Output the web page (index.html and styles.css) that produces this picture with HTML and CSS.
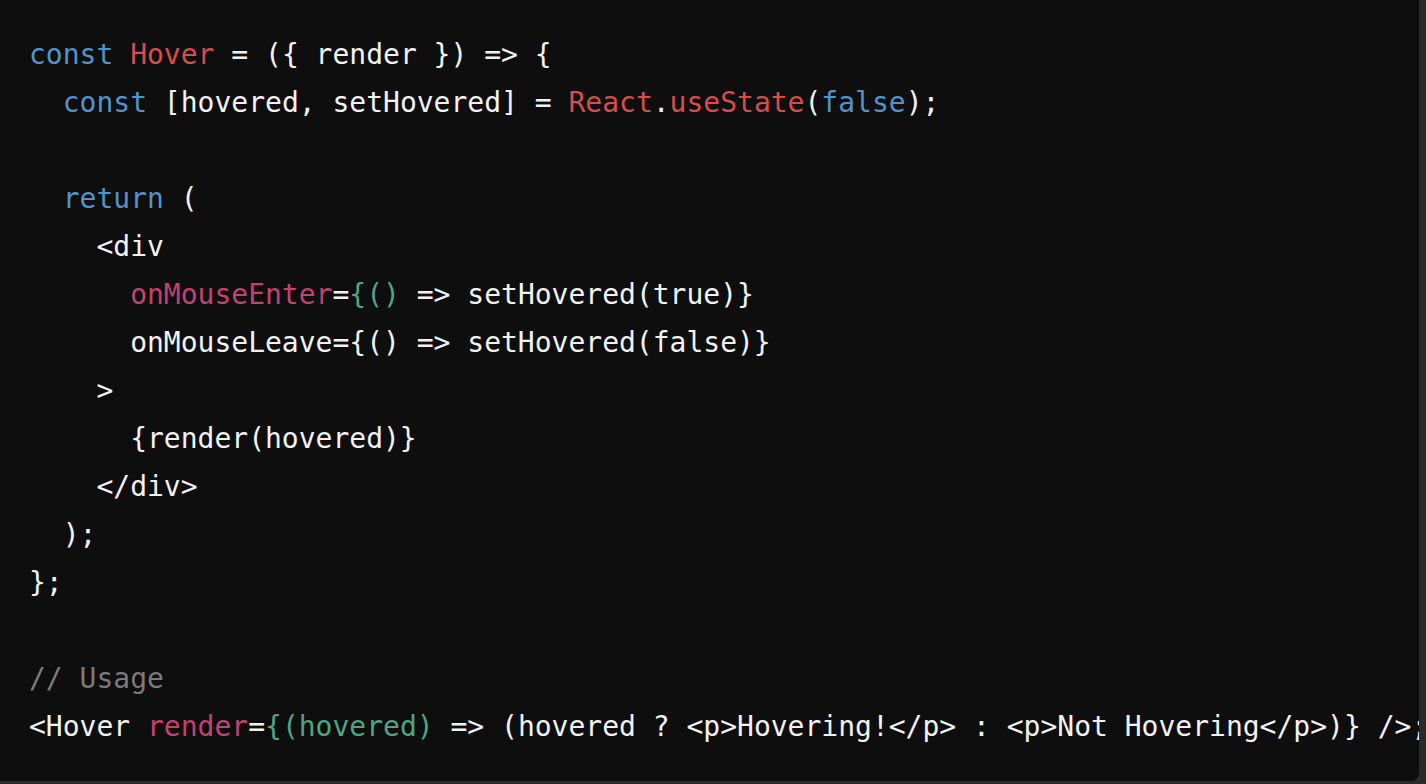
FILE: index.html
```html
<!DOCTYPE html>
<html>
<head>
<meta charset="utf-8">
<link rel="stylesheet" href="styles.css">
</head>
<body>
<div class="frame">
<pre class="code"><code><span class="kw">const</span> <span class="fn">Hover</span> = ({ render }) =&gt; {
  <span class="kw">const</span> [hovered, setHovered] = <span class="fn">React</span>.<span class="fn">useState</span>(<span class="kw">false</span>);

  <span class="kw">return</span> (
    &lt;div
      <span class="attr">onMouseEnter</span>=<span class="grn">{()</span> =&gt; setHovered(true)}
      onMouseLeave={() =&gt; setHovered(false)}
    &gt;
      {render(hovered)}
    &lt;/div&gt;
  );
};

<span class="cm">// Usage</span>
&lt;Hover <span class="attr">render</span>=<span class="grn">{(hovered)</span> =&gt; (hovered ? &lt;p&gt;Hovering!&lt;/p&gt; : &lt;p&gt;Not Hovering&lt;/p&gt;)} /&gt;;</code></pre>
</div>
</body>
</html>
```

FILE: styles.css
```css
html, body {
  margin: 0;
  padding: 0;
  background: #2a2a2a;
  width: 1426px;
  height: 784px;
  overflow: hidden;
}

.frame {
  width: 1419px;
  height: 781px;
  background: #0e0e0e;
  border-bottom-right-radius: 8px;
  overflow: hidden;
}

.code {
  margin: 0;
  padding: 31px 0 0 29px;
  font-family: "DejaVu Sans Mono", monospace;
  font-size: 28px;
  line-height: 48px;
  color: #f2f2f2;
  white-space: pre;
}

.kw { color: #5293cc; }
.fn { color: #d74d4a; }
.attr { color: #c3426f; }
.grn { color: #4fa582; }
.cm { color: #7b7b7b; }
```
